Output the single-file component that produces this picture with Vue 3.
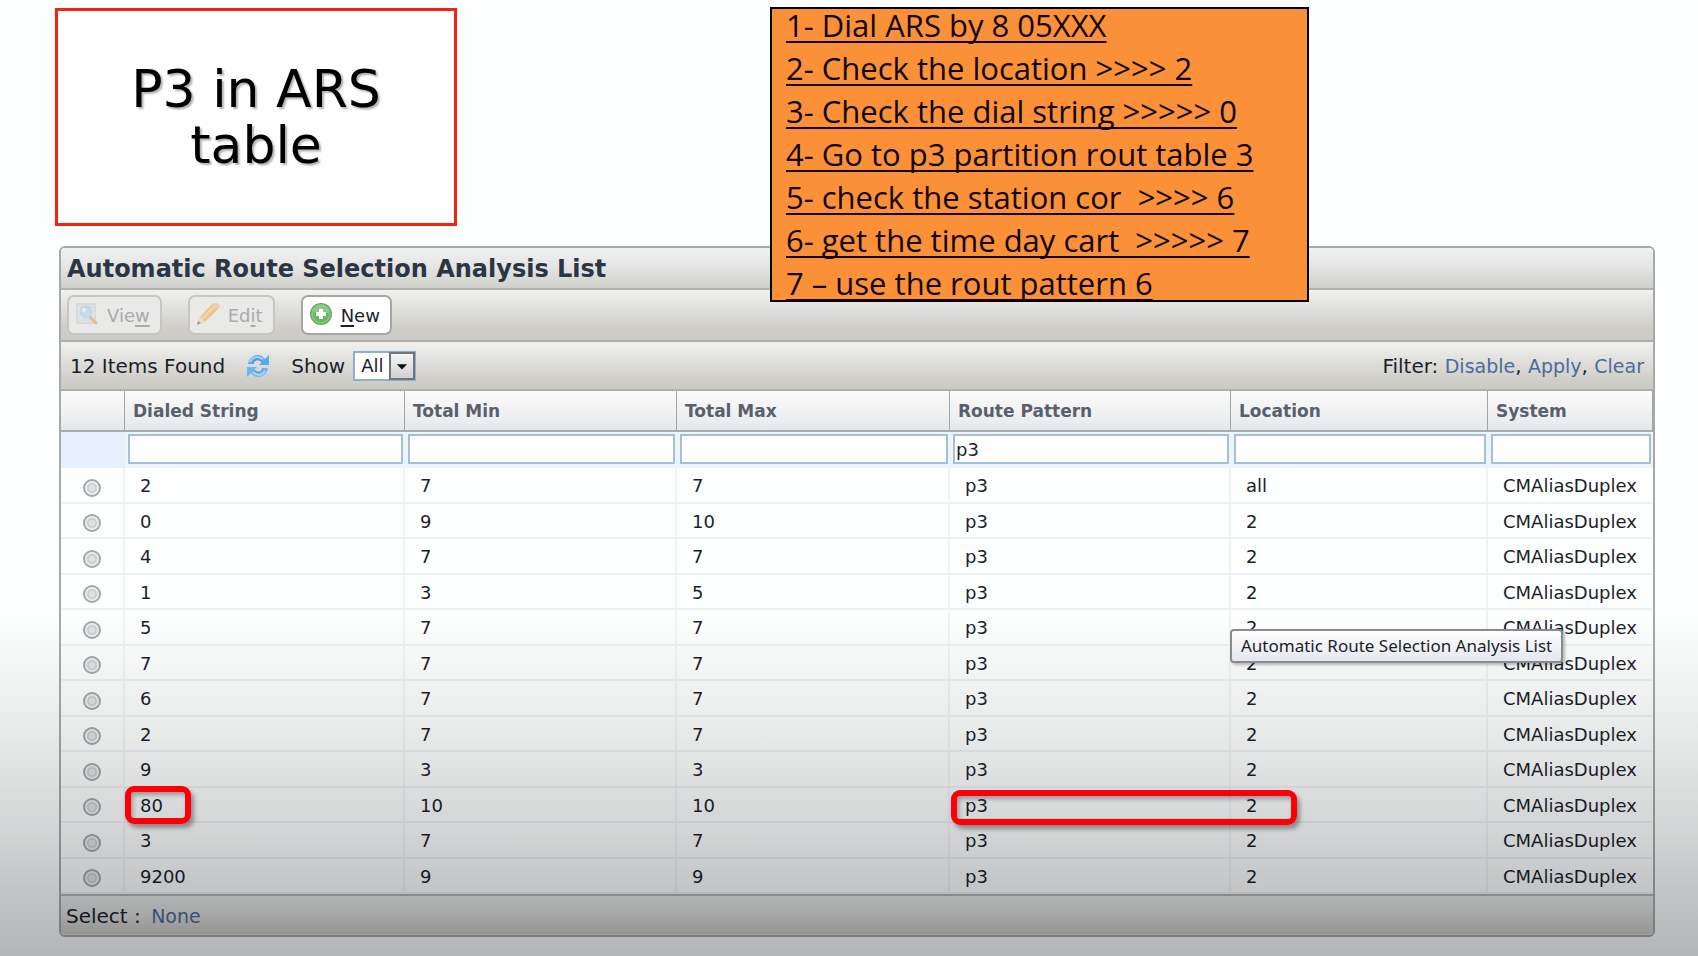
<script setup>
import { ref, reactive } from 'vue'

const steps = [
  '1- Dial ARS by 8 05XXX',
  '2- Check the location >>>> 2',
  '3- Check the dial string >>>>> 0',
  '4- Go to p3 partition rout table 3',
  '5- check the station cor  >>>> 6',
  '6- get the time day cart  >>>>> 7',
  '7 – use the rout pattern 6',
]

const columns = [
  { key: 'dialed', label: 'Dialed String' },
  { key: 'min', label: 'Total Min' },
  { key: 'max', label: 'Total Max' },
  { key: 'route', label: 'Route Pattern' },
  { key: 'location', label: 'Location' },
  { key: 'system', label: 'System' },
]

const filters = reactive({ dialed: '', min: '', max: '', route: 'p3', location: '', system: '' })

const rows = [
  ['2', '7', '7', 'all'],
  ['0', '9', '10', '2'],
  ['4', '7', '7', '2'],
  ['1', '3', '5', '2'],
  ['5', '7', '7', '2'],
  ['7', '7', '7', '2'],
  ['6', '7', '7', '2'],
  ['2', '7', '7', '2'],
  ['9', '3', '3', '2'],
  ['80', '10', '10', '2'],
  ['3', '7', '7', '2'],
  ['9200', '9', '9', '2'],
].map(([dialed, min, max, location]) => ({
  dialed, min, max, location, route: 'p3', system: 'CMAliasDuplex',
}))

const show = ref('All')
const selected = ref(null)
</script>

<template>
  <main class="page">
    <h1 class="slide-title">P3 in ARS<br />table</h1>

    <aside class="note">
      <p v-for="step in steps" :key="step"><span>{{ step }}</span></p>
    </aside>

    <section class="panel">
      <h2 class="panel-title">Automatic Route Selection Analysis List</h2>

      <div class="toolbar">
        <button type="button" class="btn" disabled>
          <svg class="icon" viewBox="0 0 24 24" aria-hidden="true">
            <rect x="2" y="2" width="18" height="19" fill="#dfe3ea" stroke="#b4b8c0" />
            <path d="M4 5h14M4 18h12" stroke="#c3c8d0" />
            <path d="M15 15l6 6" stroke="#d9a550" stroke-width="3" stroke-linecap="round" />
            <circle cx="11" cy="10" r="6" fill="#a9d4f5" stroke="#a9c0d6" stroke-width="1" />
            <circle cx="9" cy="8" r="2" fill="#e6f5ff" />
          </svg>
          <span>Vie<u>w</u></span>
        </button>
        <button type="button" class="btn" disabled>
          <svg class="icon" viewBox="0 0 24 24" aria-hidden="true">
            <path d="M1 23L4 15 16 2Q19 0 22 2T22 7L9 20Z" fill="#f2a94e" />
            <path d="M6 17L19 4" stroke="#fbc47c" stroke-width="3" />
            <path d="M1 23L4 15 9 20Z" fill="#ecd7bd" />
            <path d="M1 23L2 19 5 21Z" fill="#6e625c" />
            <path d="M16 2Q19 0 22 2T22 7Z" fill="#efb9a0" />
          </svg>
          <span>Ed<u>i</u>t</span>
        </button>
        <button type="button" class="btn">
          <svg class="icon" viewBox="0 0 24 24" aria-hidden="true">
            <circle cx="12" cy="12" r="11" fill="#5ba45a" />
            <circle cx="12" cy="12" r="9" fill="#68b565" stroke="#84c480" stroke-width="2" />
            <path d="M4 11a8 8 0 0 1 16 0q-8-3-16 0z" fill="#9bd295" opacity=".7" />
            <path d="M12 7v10M7 12h10" stroke="#fff" stroke-width="4" />
          </svg>
          <span><u>N</u>ew</span>
        </button>
      </div>

      <div class="info">
        <span>12 Items Found</span>
        <button type="button" class="refresh" aria-label="Refresh">
          <svg viewBox="0 0 26 26" aria-hidden="true">
            <path d="M3 11C4 4 11 0 17 3l3 3 4-4v10H14l3-3C13 5 9 7 8 11Z" fill="#5aa9ef" />
            <path d="M23 15c-1 7-8 11-14 8l-3-3-4 4V14h10l-3 3c4 4 8 2 9-2Z" fill="#6db6f5" />
            <path d="M17 9C13 5 9 7 8 11M9 17c4 4 8 2 9-2" fill="none" stroke="#3f86d2" />
            <path d="M5 9C8 3 13 3 18 6M20 18c-3 5-8 5-12 1" fill="none" stroke="#a5d2fb" stroke-width="2" />
          </svg>
        </button>
        <label for="show">Show</label>
        <span class="select-box">
          <select id="show" v-model="show">
            <option>All</option>
            <option>10</option>
          </select>
          <svg class="arrow" viewBox="0 0 24 28" aria-hidden="true">
            <path d="M6 12h12l-6 6z" fill="#111" />
          </svg>
        </span>
        <span class="filter-links">
          Filter: <a href="#disable">Disable</a>, <a href="#apply">Apply</a>, <a href="#clear">Clear</a>
        </span>
      </div>

      <table>
        <colgroup>
          <col class="c-pick" />
          <col v-for="c in columns" :key="c.key" :class="'c-' + c.key" />
        </colgroup>
        <thead>
          <tr class="head">
            <th></th>
            <th v-for="c in columns" :key="c.key" scope="col">{{ c.label }}</th>
          </tr>
          <tr class="filters">
            <td></td>
            <td v-for="c in columns" :key="c.key">
              <input v-model="filters[c.key]" type="text" :aria-label="'Filter ' + c.label" />
            </td>
          </tr>
        </thead>
        <tbody>
          <tr v-for="(row, i) in rows" :key="i">
            <td class="pick">
              <input v-model="selected" type="radio" name="row" :value="i" :aria-label="'Select ' + row.dialed" />
            </td>
            <td v-for="c in columns" :key="c.key">
              {{ row[c.key] }}
              <span v-if="i === 9 && c.key === 'dialed'" class="mark mark-dialed"></span>
              <span v-if="i === 9 && c.key === 'route'" class="mark mark-route"></span>
              <span v-if="i === 4 && c.key === 'location'" class="tooltip" role="tooltip">Automatic Route Selection Analysis List</span>
            </td>
          </tr>
        </tbody>
      </table>

      <footer class="panel-foot">Select : <a href="#none">None</a></footer>
    </section>
  </main>
</template>

<style>
body {
  background: #fdfefe;
}
</style>

<style scoped>
.page {
  position: relative;
  box-sizing: border-box;
  min-height: 100vh;
  padding: 8px 43px 19px 59px;
  font-family: "DejaVu Sans", Verdana, sans-serif;
  font-size: 18px;
  color: #1c1f2b;
}

.page::after {
  content: "";
  position: absolute;
  inset: 0;
  z-index: 1;
  pointer-events: none;
  background: linear-gradient(
    to bottom,
    rgba(0, 4, 8, 0) 64%,
    rgba(0, 4, 8, 0.05) 72%,
    rgba(0, 4, 8, 0.11) 80%,
    rgba(0, 4, 8, 0.17) 87%,
    rgba(0, 4, 8, 0.24) 94%,
    rgba(0, 4, 8, 0.29) 100%
  );
}

.slide-title {
  display: flex;
  align-items: center;
  justify-content: center;
  box-sizing: border-box;
  width: 402px;
  height: 218px;
  margin: 0 0 20px -4px;
  border: 3px solid #f0240f;
  background: #fefefe;
  font-size: 52px;
  font-weight: 400;
  line-height: 56px;
  text-align: center;
  color: #000;
  text-shadow: 2px 2px 2px rgba(0, 0, 0, 0.3);
}

.note {
  position: absolute;
  top: 7px;
  left: 770px;
  z-index: 2;
  display: flex;
  flex-direction: column;
  justify-content: center;
  box-sizing: border-box;
  width: 539px;
  height: 295px;
  padding: 0 14px;
  border: 2px solid #000;
  background: #fa9139;
  font-family: "Open Sans", "Noto Sans", sans-serif;
  font-size: 31px;
  line-height: 43px;
  color: #120400;
}

.note p {
  margin: 0;
  white-space: pre;
  text-decoration: underline;
  text-decoration-thickness: 2px;
  text-underline-offset: 4px;
  text-decoration-skip-ink: none;
}

.panel {
  border: 2px solid #a8a9a9;
  border-radius: 6px;
  background: #fdfefe;
}

.panel-title {
  box-sizing: border-box;
  height: 42px;
  margin: 0;
  padding: 0 6px;
  border-bottom: 2px solid #b1b1ae;
  border-radius: 4px 4px 0 0;
  background: linear-gradient(#f0f1f2, #e4e4e3 50%, #cfcfcb);
  font-size: 24px;
  line-height: 42px;
  color: #2b3544;
}

.toolbar {
  display: flex;
  align-items: center;
  gap: 26px;
  box-sizing: border-box;
  height: 52px;
  padding: 0 6px;
  border-bottom: 2px solid #aeaeab;
  background: linear-gradient(#f1f1ef, #cfcec9 75%, #cccbc7);
}

.btn {
  display: flex;
  align-items: center;
  gap: 8px;
  height: 40px;
  padding: 2px 10px 0 6px;
  border: 2px solid #a6a6a4;
  border-radius: 7px;
  background: #fefefe;
  font: inherit;
  line-height: 24px;
  color: #1c1f2b;
}

.btn:disabled {
  border-color: #c6c6c3;
  background: #e9e9e7;
  color: #aaabae;
}

.btn:disabled .icon {
  opacity: 0.6;
}

.btn u {
  text-decoration-thickness: 2px;
  text-underline-offset: 3px;
}

.icon {
  width: 24px;
  height: 24px;
  margin-bottom: 4px;
}

.info {
  display: flex;
  align-items: center;
  box-sizing: border-box;
  height: 49px;
  padding: 0 9px;
  border-bottom: 2px solid #aeaeab;
  background: linear-gradient(#f1f1ef, #cfcec9 80%, #cccbc7);
  font-size: 20px;
}

.refresh {
  width: 26px;
  height: 26px;
  margin: 0 20px;
  padding: 0;
  border: 0;
  background: none;
}

.refresh svg {
  display: block;
}

.select-box {
  position: relative;
  margin-left: 8px;
}

.select-box select {
  display: block;
  appearance: none;
  box-sizing: border-box;
  width: 63px;
  height: 30px;
  padding: 0 0 0 6px;
  border: 2px solid #8fb0cb;
  border-radius: 0;
  background: #fefefe;
  font: inherit;
  font-size: 18px;
  color: #1c1f2b;
}

.arrow {
  position: absolute;
  top: 1px;
  right: 1px;
  box-sizing: border-box;
  width: 26px;
  height: 28px;
  border: 2px solid #70757c;
  background: linear-gradient(#f4f4f4, #d2d2d4);
  pointer-events: none;
}

.filter-links {
  margin-left: auto;
}

.filter-links a {
  font-size: 19px;
}

a {
  color: #4d6b9c;
  text-decoration: none;
}

table {
  width: 100%;
  table-layout: fixed;
  border-collapse: separate;
  border-spacing: 0;
}

.c-pick { width: 64px; }
.c-dialed { width: 280px; }
.c-min { width: 272px; }
.c-max { width: 273px; }
.c-route { width: 281px; }
.c-location { width: 257px; }
.c-system { width: 165px; }

th {
  box-sizing: border-box;
  height: 41px;
  padding: 0 8px;
  border-right: 1px solid #a3a4a8;
  border-bottom: 2px solid #a9aaad;
  background: linear-gradient(#fbfbfb, #f1f2f3 50%, #e6e7ea);
  font-size: 17px;
  text-align: left;
  color: #59606b;
}

.filters td {
  box-sizing: border-box;
  height: 36px;
  padding: 0 2px 2px 3px;
  background: #eef4fc;
}

.filters td:first-child {
  background: #e5f0fc;
}

.filters input {
  display: block;
  box-sizing: border-box;
  width: 100%;
  height: 30px;
  padding: 0 1px;
  border: 2px solid #a3c0d6;
  background: #fefefe;
  font: inherit;
  color: #1c1f2b;
}

tbody td {
  position: relative;
  box-sizing: border-box;
  height: 36px;
  padding: 2px 0 0 15px;
  border-right: 2px solid #f2f3f6;
  border-bottom: 2px solid #f0f1f4;
  line-height: 24px;
}

tbody tr:nth-child(even) td {
  height: 35px;
}

tbody td:last-child {
  border-right-color: transparent;
}

tbody .pick {
  padding: 5px 0 0;
  text-align: center;
}

.pick input {
  display: block;
  appearance: none;
  box-sizing: border-box;
  width: 18px;
  height: 18px;
  margin: 0 auto;
  border: 2px solid #a4a6a8;
  border-radius: 50%;
  background: radial-gradient(circle, #e0e1e3 0 3px, #c3c5c8 4px, #f1f1f2 6px);
}

.mark {
  position: absolute;
  z-index: 2;
  box-sizing: border-box;
  border: 6px solid #fb0007;
  border-radius: 9px;
  box-shadow: 3px 4px 4px rgba(0, 0, 0, 0.35), inset 2px 3px 4px rgba(0, 0, 0, 0.3);
}

.mark-dialed {
  top: -2px;
  left: 0;
  width: 66px;
  height: 38px;
}

.mark-route {
  top: 2px;
  left: 1px;
  width: calc(100% + 67px);
  height: 35px;
}

.tooltip {
  position: absolute;
  top: 19px;
  left: -1px;
  z-index: 2;
  padding: 0 9px;
  border: 2px solid #8a8b90;
  border-radius: 4px;
  background: linear-gradient(#fefefe, #e6e6f0);
  box-shadow: 2px 2px 3px rgba(0, 0, 0, 0.25);
  font-family: "Noto Sans", "Open Sans", sans-serif;
  font-size: 17px;
  line-height: 30px;
  white-space: nowrap;
}

.panel-foot {
  box-sizing: border-box;
  height: 41px;
  padding: 0 5px;
  border-top: 2px solid #b2b3b3;
  border-radius: 0 0 4px 4px;
  background: linear-gradient(#e9e9e9, #e0e0df 45%, #cbcac5);
  box-shadow: inset 0 -1px #dededc;
  font-size: 20px;
  line-height: 40px;
}

.panel-foot a {
  margin-left: 4px;
  font-size: 19px;
}
</style>
